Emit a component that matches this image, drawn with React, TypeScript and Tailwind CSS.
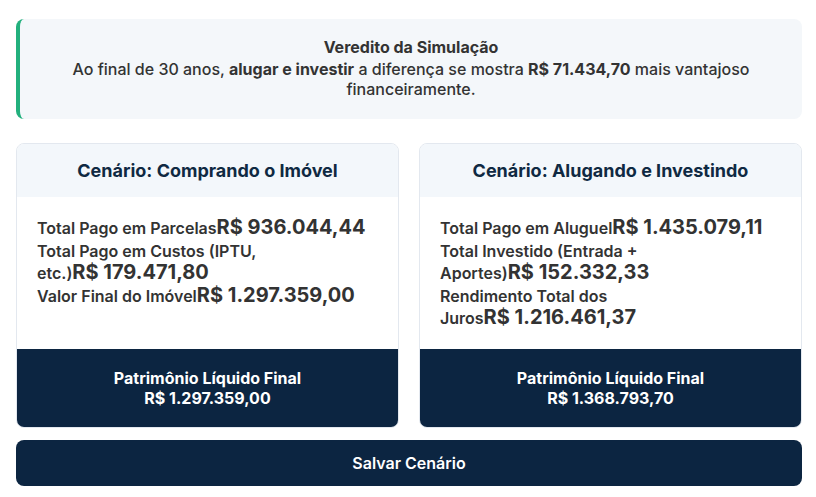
const font = { fontFamily: 'Inter, "Noto Sans", sans-serif' }

type Item = { label: string; value: string }

function ScenarioCard({ title, items, total }: { title: string; items: Item[]; total: string }) {
  return (
    <div className="flex flex-col overflow-hidden rounded-lg border border-[#e3e8ef] bg-white">
      <div className="bg-[#f3f7fb] py-3 text-center text-lg font-bold leading-[29px] text-[#0f2942]">
        {title}
      </div>
      <div className="flex-1 px-5 pt-5 pb-[19px] text-base font-semibold leading-[22.5px] text-[#333333]">
        {items.map((it) => (
          <div key={it.label}>
            {it.label}
            <span className="whitespace-nowrap text-[20px] font-bold leading-5">{it.value}</span>
          </div>
        ))}
      </div>
      <div className="bg-[#0c2541] py-[19px] text-center text-base font-bold leading-5 text-white">
        <div>Patrimônio Líquido Final</div>
        <div>{total}</div>
      </div>
    </div>
  )
}

export default function App() {
  return (
    <div className="min-h-screen bg-white pl-4 pr-[14px] pt-[19px] pb-3" style={font}>
      <div className="rounded-lg border-l-4 border-[#22b07d] bg-[#f4f7fa] px-6 pt-[18px] pb-5 text-center text-base leading-5 text-[#333333]">
        <div className="mb-0.5 font-bold">Veredito da Simulação</div>
        <p className="font-medium">
          Ao final de 30 anos, <strong className="font-bold">alugar e investir</strong> a diferença se mostra{' '}
          <strong className="font-bold">R$ 71.434,70</strong> mais vantajoso financeiramente.
        </p>
      </div>

      <div className="mt-6 grid grid-cols-2 gap-5">
        <ScenarioCard
          title="Cenário: Comprando o Imóvel"
          items={[
            { label: 'Total Pago em Parcelas', value: 'R$ 936.044,44' },
            { label: 'Total Pago em Custos (IPTU, etc.)', value: 'R$ 179.471,80' },
            { label: 'Valor Final do Imóvel', value: 'R$ 1.297.359,00' },
          ]}
          total="R$ 1.297.359,00"
        />
        <ScenarioCard
          title="Cenário: Alugando e Investindo"
          items={[
            { label: 'Total Pago em Aluguel', value: 'R$ 1.435.079,11' },
            { label: 'Total Investido (Entrada + Aportes)', value: 'R$ 152.332,33' },
            { label: 'Rendimento Total dos Juros', value: 'R$ 1.216.461,37' },
          ]}
          total="R$ 1.368.793,70"
        />
      </div>

      <button className="mt-3 w-full rounded-lg bg-[#0c2541] py-[11px] text-base font-semibold leading-6 text-white">
        Salvar Cenário
      </button>
    </div>
  )
}
